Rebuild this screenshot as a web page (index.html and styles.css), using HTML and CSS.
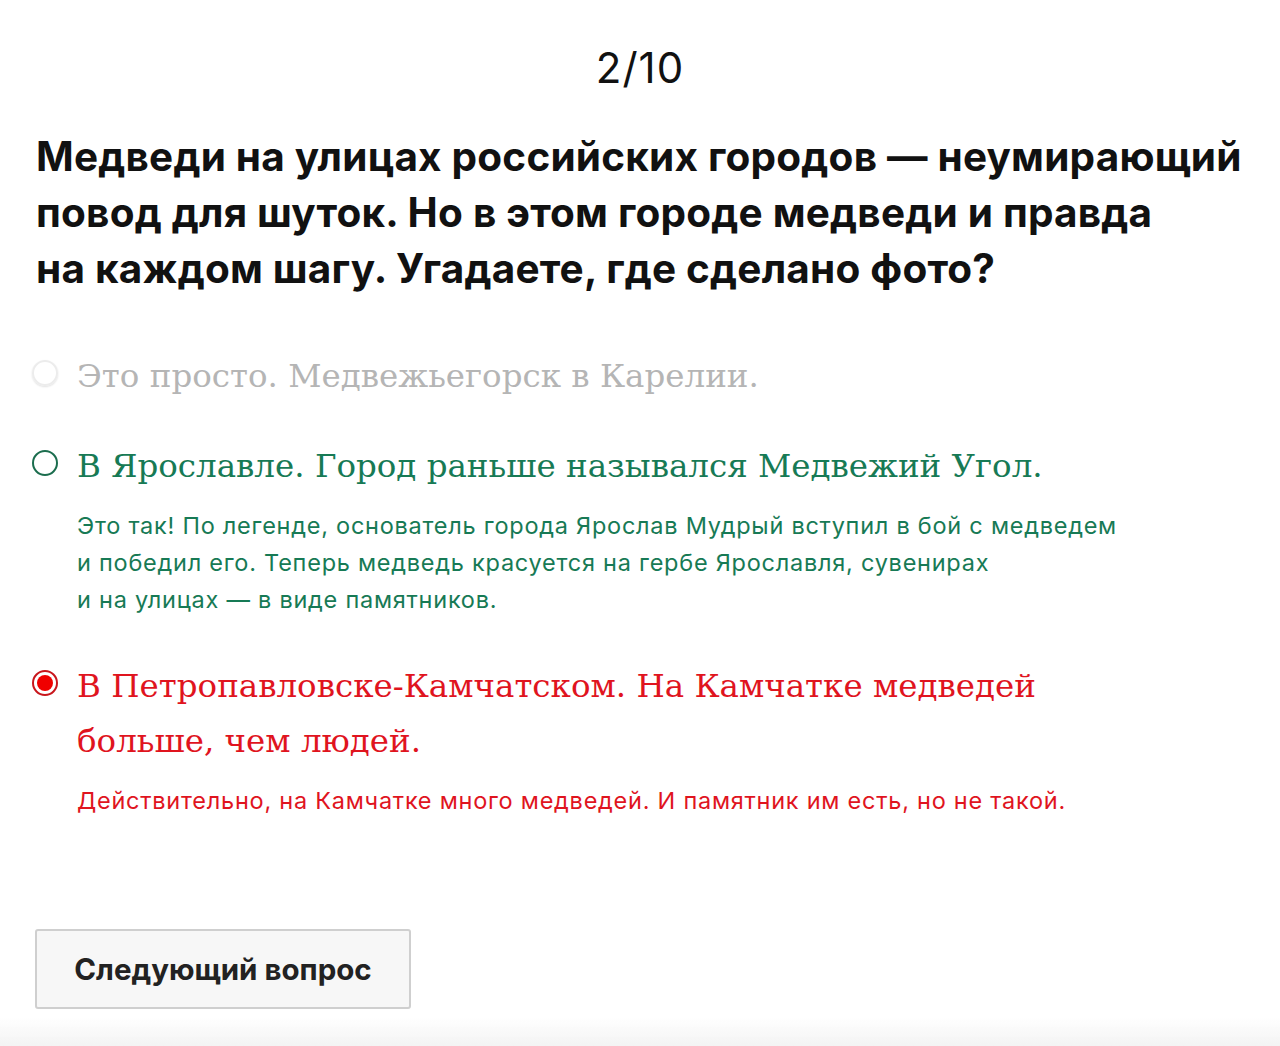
FILE: index.html
```html
<!DOCTYPE html>
<html lang="ru">
<head>
    <meta charset="UTF-8">
    <meta name="viewport" content="width=device-width, initial-scale=1.0">
    <title>Тест</title>
    <link rel="stylesheet" href="styles.css">
</head>
<body>
<div class="quiz">
    <p class="counter">2/10</p>
    <h1 class="question">Медведи на улицах российских городов — неумирающий<br>повод для шуток. Но в этом городе медведи и правда<br>на каждом шагу. Угадаете, где сделано фото?</h1>

    <div class="answers">
        <div class="answer muted">
            <span class="radio"></span>
            <div class="answer-body">
                <p class="answer-text">Это просто. Медвежьегорск в Карелии.</p>
            </div>
        </div>
        <div class="answer right">
            <span class="radio"></span>
            <div class="answer-body">
                <p class="answer-text">В Ярославле. Город раньше назывался Медвежий Угол.</p>
                <p class="answer-note">Это так! По легенде, основатель города Ярослав Мудрый вступил в бой с медведем<br>и победил его. Теперь медведь красуется на гербе Ярославля, сувенирах<br>и на улицах — в виде памятников.</p>
            </div>
        </div>
        <div class="answer wrong">
            <span class="radio checked"></span>
            <div class="answer-body">
                <p class="answer-text">В Петропавловске-Камчатском. На Камчатке медведей<br>больше, чем людей.</p>
                <p class="answer-note">Действительно, на Камчатке много медведей. И памятник им есть, но не такой.</p>
            </div>
        </div>
    </div>

    <button class="next">Следующий вопрос</button>
</div>
<div class="bottom-fade"></div>
</body>
</html>
```

FILE: styles.css
```css
html, body {
  margin: 0;
  padding: 0;
  background: #fff;
}
body {
  font-family: Inter, "Liberation Sans", Arial, sans-serif;
  color: #000;
}
p {
  margin: 0;
}
.quiz {
  padding: 42px 36px 0 36px;
}
.counter {
  text-align: center;
  font-size: 42px;
  line-height: 52px;
  letter-spacing: 1px;
  color: #111;
}
.question {
  margin: 35px 0 0 0;
  font-size: 40.5px;
  line-height: 56px;
  letter-spacing: 0.2px;
  font-weight: bold;
  color: #111;
}
.answers {
  margin-top: 52px;
  display: flex;
  flex-direction: column;
  gap: 35px;
}
.answer {
  display: flex;
  gap: 19px;
  align-items: flex-start;
  margin-left: -4px;
}
.answer.wrong {
  margin-top: 6px;
}
.radio {
  flex: none;
  width: 26px;
  height: 26px;
  margin-top: 11px;
  border: 2px solid #1b6d4e;
  border-radius: 50%;
  box-sizing: border-box;
  position: relative;
}
.answer-text {
  font-family: "DejaVu Serif", "Liberation Serif", serif;
  font-size: 32.5px;
  line-height: 55px;
}
.answer-note {
  margin-top: 13px;
  font-size: 23.5px;
  line-height: 37px;
  letter-spacing: 0.75px;
}
.muted {
  color: #b5b5b5;
}
.muted .radio {
  border: 2px solid #ececec;
  box-shadow: 0 1px 2px rgba(0,0,0,0.12);
}
.right {
  color: #177a55;
}
.wrong {
  color: #e0141e;
}
.wrong .radio {
  border-color: #c8161c;
}
.radio.checked::after {
  content: "";
  position: absolute;
  left: 3px;
  top: 3px;
  width: 16px;
  height: 16px;
  border-radius: 50%;
  background: #f00000;
}
.next {
  margin-top: 110px;
  width: 376px;
  height: 80px;
  background: #f7f7f7;
  border: 2px solid #cfcfcf;
  border-radius: 3px;
  font-family: Inter, "Liberation Sans", Arial, sans-serif;
  font-size: 29.5px;
  font-weight: bold;
  color: #222;
  margin-left: -1px;
}
.bottom-fade {
  position: fixed;
  left: 0;
  right: 0;
  bottom: 0;
  height: 28px;
  background: linear-gradient(to bottom, rgba(243,243,243,0), #f3f3f3);
}
```
